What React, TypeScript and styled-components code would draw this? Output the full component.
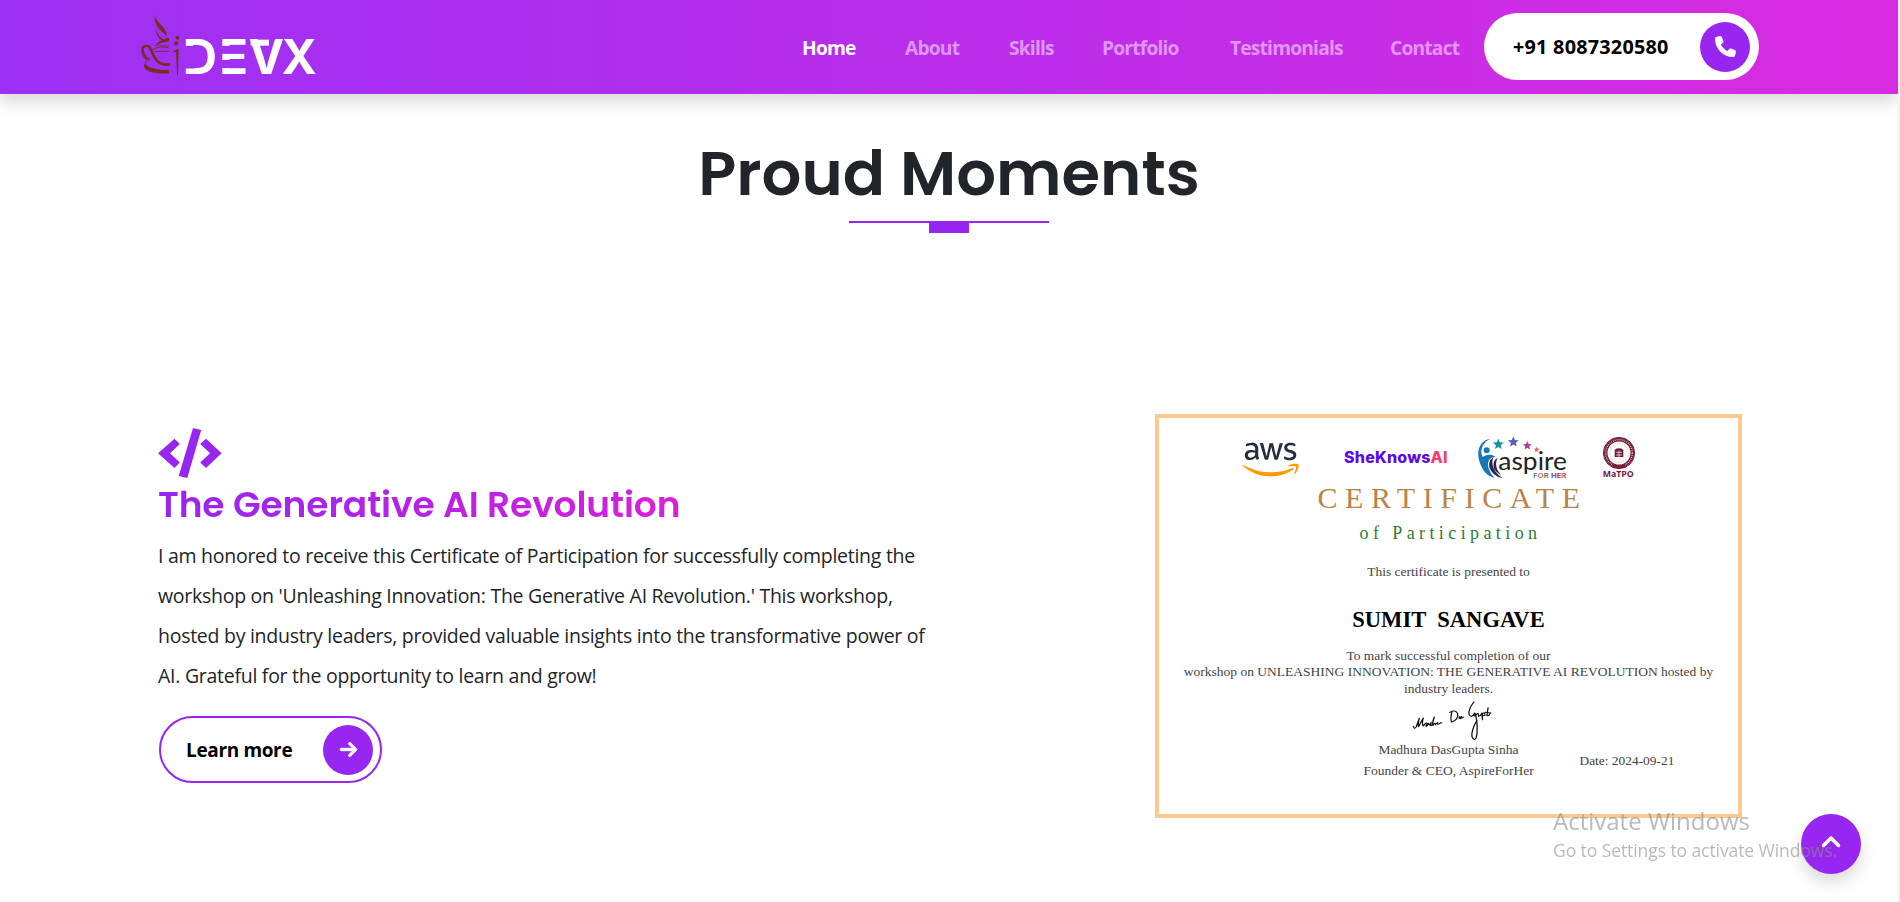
import React from 'react';
import styled, { createGlobalStyle } from 'styled-components';
import { FaPhone, FaArrowRight, FaChevronUp } from 'react-icons/fa6';
import { FaAws } from 'react-icons/fa';

const PURPLE = '#9726f0';
const SANS = '"Open Sans", "Noto Sans", sans-serif';
const DISPLAY = 'Poppins, Inter, sans-serif';

const GlobalStyle = createGlobalStyle`
  * { box-sizing: border-box; }
  html, body { margin: 0; height: 902px; overflow: hidden; background: #fff; }
  h1, h2, p { margin: 0; }
  a { text-decoration: none; color: inherit; }
`;

const Page = styled.div`
  width: 1900px;
  height: 902px;
  overflow: hidden;
  border-right: 2px solid #f1f1f1;
  font-family: ${SANS};
  color: #212529;
`;

const Header = styled.header`
  display: flex;
  align-items: center;
  height: 94px;
  padding: 0 139px 1px 140px;
  background: linear-gradient(to right, #9c30f3, #d82be1);
  box-shadow: 0 8px 16px rgba(0, 0, 0, 0.15);
`;

const LogoMark = styled.svg`
  display: block;
  margin-bottom: 3px;
  overflow: visible;
`;

const Nav = styled.nav`
  display: flex;
  gap: 48px;
  margin-left: auto;
  margin-right: 24px;
  padding-top: 2px;
`;

const NavLink = styled.a<{ $width: number; $active?: boolean }>`
  width: ${p => p.$width}px;
  font-size: 19.2px;
  font-weight: 700;
  line-height: 30px;
  letter-spacing: -0.8px;
  white-space: nowrap;
  color: ${p => (p.$active ? '#fff' : 'rgba(255, 255, 255, 0.5)')};
`;

const PillButton = styled.a<{ $width: number; $outlined?: boolean }>`
  display: flex;
  align-items: center;
  justify-content: space-between;
  width: ${p => p.$width}px;
  height: 67px;
  padding: ${p => (p.$outlined ? '0 7px 0 25px' : '0 9px 0 29px')};
  border: ${p => (p.$outlined ? `2px solid ${PURPLE}` : '0')};
  border-radius: 34px;
  background: #fff;
  color: #000;
  font-size: ${p => (p.$outlined ? 19 : 19.8)}px;
  font-weight: 700;
  letter-spacing: ${p => (p.$outlined ? -0.35 : 0.25)}px;
  white-space: nowrap;
`;

const IconDisc = styled.span`
  display: flex;
  align-items: center;
  justify-content: center;
  width: 50px;
  height: 50px;
  border-radius: 50%;
  background: ${PURPLE};
  color: #fff;
  font-size: 21px;
`;

const BoldArrow = styled(FaArrowRight)`
  stroke: currentColor;
  stroke-width: 26px;
`;

const BoldChevron = styled(FaChevronUp)`
  stroke: currentColor;
  stroke-width: 26px;
`;

const TitleBlock = styled.section`
  display: flex;
  flex-direction: column;
  align-items: center;
  padding-top: 42px;
`;

const Title = styled.h1`
  font-family: ${DISPLAY};
  font-size: 62.5px;
  font-weight: 600;
  line-height: 74px;
`;

const Rule = styled.div`
  display: flex;
  justify-content: center;
  width: 200px;
  height: 12px;
  margin-top: 11px;
  border-top: 2px solid ${PURPLE};
`;

const RuleTab = styled.span`
  width: 40px;
  height: 10px;
  background: ${PURPLE};
`;

const Moment = styled.section`
  display: flex;
  justify-content: space-between;
  align-items: flex-start;
  padding: 181px 156px 0 159px;
`;

const Story = styled.div`
  display: flex;
  flex-direction: column;
  align-items: flex-start;
  width: 780px;
  padding-top: 14px;
`;

const CodeIcon = styled.svg`
  display: block;
  margin-left: -1px;
`;

const StoryTitle = styled.h2`
  margin: 5px 0 10px -1px;
  font-family: ${DISPLAY};
  font-size: 36px;
  font-weight: 600;
  line-height: 43px;
  letter-spacing: -0.1px;
  color: transparent;
  background: linear-gradient(to right, ${PURPLE}, #d91fdc);
  background-clip: text;
  -webkit-background-clip: text;
`;

const StoryText = styled.p`
  margin: 0 0 20px -1px;
  font-size: 19.5px;
  line-height: 40px;
  letter-spacing: -0.27px;
`;

const TextLine = styled.span`
  display: block;
  white-space: nowrap;
`;

const Certificate = styled.article`
  display: flex;
  flex-direction: column;
  width: 587px;
  height: 404px;
  padding-top: 17px;
  border: 4px solid #fcca90;
  background: #fff;
  font-family: "Liberation Serif", "Times New Roman", serif;
  text-align: center;
  color: #444;
`;

const Sponsors = styled.div`
  display: flex;
  height: 47px;
  padding-left: 83px;
`;

const AwsLogo = styled.div`
  width: 57px;
  margin-right: 45px;
  padding-top: 2px;
  svg { display: block; width: 57px; height: 45px; }
`;

const GradientDefs = styled.svg`
  && { position: absolute; width: 0; height: 0; }
`;

const SheKnows = styled.div`
  width: 104px;
  margin-right: 29px;
  padding-top: 10px;
  font: 800 16px/24px Inter, sans-serif;
  letter-spacing: 0.2px;
  text-align: left;
  color: #5a0be8;
`;

const Pink = styled.span`color: #fb3b6e;`;

const AspireLogo = styled.svg`margin-right: 30px;`;

const CertTitle = styled.div`
  padding-left: 8px;
  font-size: 30px;
  line-height: 32px;
  letter-spacing: 7.6px;
  color: #b8844a;
`;

const CertSubtitle = styled.div`
  padding-left: 4px;
  font-size: 18px;
  line-height: 38px;
  letter-spacing: 4.4px;
  color: #2e7d32;
`;

const CertLine = styled.div<{ $height: number }>`
  font-size: 13.5px;
  line-height: ${p => p.$height}px;
  white-space: nowrap;
`;

const Recipient = styled.div`
  padding-top: 2px;
  font-size: 22.6px;
  font-weight: 700;
  line-height: 54.6px;
  white-space: pre;
  color: #000;
`;

const SignRow = styled.div`
  display: grid;
  grid-template-columns: 1fr 170px 1fr;
  align-items: end;
  margin-top: 2.5px;
`;

const Signer = styled.div`
  grid-column: 2;
  svg { display: block; margin: 0 auto -3px 47px; }
`;

const IssueDate = styled.div`
  margin: 0 0 10px 46px;
  font-size: 13.4px;
  line-height: 21px;
  text-align: left;
`;

const ToTop = styled.button`
  position: fixed;
  left: 1801px;
  top: 814px;
  display: flex;
  align-items: center;
  justify-content: center;
  width: 60px;
  height: 60px;
  padding: 0 0 2px;
  border: 0;
  border-radius: 50%;
  background: ${PURPLE};
  box-shadow: 0 8px 16px rgba(0, 0, 0, 0.15);
  color: #fff;
  font-size: 20px;
`;

const Watermark = styled.aside`
  position: fixed;
  left: 1553px;
  top: 804px;
  white-space: nowrap;
  color: rgba(140, 140, 140, 0.6);
`;

const WatermarkTitle = styled.div`
  font-size: 24px;
  line-height: 33px;
`;

const WatermarkText = styled.div`
  font-size: 17.6px;
  line-height: 27px;
  letter-spacing: -0.12px;
`;

const star = (cx: number, cy: number, r: number) =>
  Array.from({ length: 10 }, (_, i) => {
    const a = (Math.PI / 5) * i - Math.PI / 2;
    const d = i % 2 ? r * 0.45 : r;
    return `${(cx + d * Math.cos(a)).toFixed(1)},${(cy + d * Math.sin(a)).toFixed(1)}`;
  }).join(' ');

const navItems = [
  { label: 'Home', width: 55 },
  { label: 'About', width: 56 },
  { label: 'Skills', width: 45 },
  { label: 'Portfolio', width: 80 },
  { label: 'Testimonials', width: 112 },
  { label: 'Contact', width: 70 },
];

const storyLines = [
  'I am honored to receive this Certificate of Participation for successfully completing the',
  "workshop on 'Unleashing Innovation: The Generative AI Revolution.' This workshop,",
  'hosted by industry leaders, provided valuable insights into the transformative power of',
  'AI. Grateful for the opportunity to learn and grow!',
];

const Logo = () => (
  <LogoMark width="177" height="64" viewBox="60 40 531 192">
    <defs>
      <mask id="stencil" maskUnits="userSpaceOnUse" x="180" y="100" width="420" height="140">
        <rect x="180" y="100" width="420" height="140" fill="#fff" />
        <rect x="190" y="138.500" width="34" height="68" fill="#000" />
        <rect x="300" y="138.500" width="86" height="24" fill="#000" />
        <rect x="300" y="181" width="86" height="24" fill="#000" />
      </mask>
    </defs>
    <g fill="#74301f">
      <path d="M103 45C110 70 139 82 142 108C128 98 102 84 103 45Z" />
      <path d="M107 88C112 106 127 116 140 129C124 126 106 108 107 88Z" />
      <path d="M147 114C130 116 112 128 103 142C116 131 132 127 147 125Z" />
      <path d="M76 194C92 208 120 212 147 211V221C112 224 74 218 72 200C72 195 74 192 76 194Z" />
      <path d="M165 152L176 147L174 226H171L168 158L160 156Z" />
      <circle cx="172" cy="114" r="6" />
      <circle cx="169" cy="131" r="6.500" />
    </g>
    <g fill="none" stroke="#74301f" strokeLinecap="round">
      <path strokeWidth="2.500" d="M98 149Q120 137 147 145M104 155H147M112 137Q128 142 146 138" />
      <path strokeWidth="8" d="M79 176C64 160 64 140 78 139C94 138 93 156 103 172C112 190 128 196 146 195" />
      <path strokeWidth="3" d="M81 180C88 186 94 172 88 176C74 188 74 194 78 200" />
    </g>
    <g fill="#fff">
      <rect x="392" y="120" width="55" height="18" />
      <text mask="url(#stencil)" x="188 298 386 485" y="223" fontFamily="Inter, sans-serif" fontWeight="700" fontSize="142">DEVX</text>
    </g>
  </LogoMark>
);

const Aspire = () => (
  <AspireLogo width="93.3" height="46.7" viewBox="110 30 280 140">
    <defs>
      <linearGradient id="her" x1="0" x2="1">
        <stop offset="0" stopColor="#3b6fd0" />
        <stop offset="0.45" stopColor="#b03aa0" />
        <stop offset="0.7" stopColor="#f08a3a" />
        <stop offset="1" stopColor="#5a50c8" />
      </linearGradient>
    </defs>
    <path fill="#1678b8" d="M150 42C120 44 106 78 118 112C126 138 142 154 162 159C138 130 134 98 166 96C152 84 134 90 127 96C117 78 126 52 150 42Z" />
    <circle cx="139" cy="76" r="9" fill="#1678b8" />
    <path fill="#2b2455" d="M159 98C136 106 144 150 186 159C162 142 150 118 159 98ZM172 99C154 106 154 138 182 149C167 134 163 114 172 99Z" />
    <polygon points={star(174, 58, 17)} fill="#16909a" />
    <polygon points={star(219, 51, 17)} fill="#5660c4" />
    <polygon points={star(261, 62, 14)} fill="#b0399c" />
    <polygon points={star(289, 74, 9)} fill="#f05f68" />
    <text x="174" y="136" fontFamily="Lato, sans-serif" fontSize="78" textLength="206" lengthAdjust="spacingAndGlyphs" fill="#222">aspire</text>
    <text x="279" y="160" fontFamily="Inter, sans-serif" fontSize="20" textLength="46" lengthAdjust="spacingAndGlyphs" fill="#333">FOR</text>
    <text x="332" y="160" fontFamily="Inter, sans-serif" fontWeight="800" fontSize="20" textLength="46" lengthAdjust="spacingAndGlyphs" fill="url(#her)">HER</text>
  </AspireLogo>
);

const Seal = () => (
  <svg width="36.7" height="45" viewBox="480 30 110 135">
    <circle cx="537" cy="84" r="47" fill="#fff" stroke="#741c3c" strokeWidth="3" />
    <circle cx="537" cy="84" r="40" fill="none" stroke="#741c3c" strokeWidth="11" />
    <circle cx="537" cy="84" r="40" fill="none" stroke="#d9b9c4" strokeWidth="4" strokeDasharray="3 3" />
    <circle cx="537" cy="84" r="28" fill="#fff" stroke="#c8a86a" strokeWidth="2" strokeDasharray="4 3" />
    <path fill="#741c3c" d="M524 74Q537 66 550 74V96H524Z" />
    <path stroke="#fff" strokeWidth="2" d="M528 82H546M528 90H546M537 76V96" />
    <path fill="#741c3c" d="M519 117L537 122L556 117V129H519Z" />
    <text x="488" y="157" fontFamily="Open Sans, sans-serif" fontWeight="700" fontSize="24" textLength="93" lengthAdjust="spacingAndGlyphs" fill="#741c3c">MaTPO</text>
  </svg>
);

const Signature = () => (
  <svg width="83" height="41.700" viewBox="685 335 210 125" preserveAspectRatio="none" fill="none" stroke="#111" strokeWidth="3.200" strokeLinecap="round" strokeLinejoin="round">
    <path d="M691 414Q693 424 698 416L706 390Q702 408 704 415L716 389Q712 408 716 413Q724 400 726 406Q720 416 725 413L730 405Q731 416 736 402Q732 414 738 411L744 386Q738 404 741 411Q746 400 747 409L752 403Q752 411 757 406Q759 402 763 404" />
    <path d="M788 372Q784 396 788 401Q806 394 803 376Q798 362 783 372M807 390Q806 383 810 386Q808 396 813 385Q812 394 818 386" />
    <path d="M844 341Q830 362 832 378Q838 392 846 374Q842 388 850 380Q856 368 856 384Q862 382 864 374M848 376Q856 420 850 448Q844 460 839 444Q838 424 852 396M864 374L866 394Q864 372 870 374Q876 382 868 382M880 358L877 382Q882 384 886 374M872 372L887 374" />
  </svg>
);

export default function App() {
  return (
    <>
      <GlobalStyle />
      <Page>
        <Header>
          <Logo />
          <Nav>
            {navItems.map((item, i) => (
              <NavLink key={item.label} href="#" $width={item.width} $active={i === 0}>{item.label}</NavLink>
            ))}
          </Nav>
          <PillButton href="#" $width={275}>
            +91 8087320580
            <IconDisc><FaPhone /></IconDisc>
          </PillButton>
        </Header>

        <TitleBlock>
          <Title>Proud Moments</Title>
          <Rule><RuleTab /></Rule>
        </TitleBlock>

        <Moment>
          <Story>
            <CodeIcon width="64" height="50" viewBox="0 0 64 50" fill={PURPLE}>
              <path d="M0 25.300L16.500 10.700L21.800 16L12.100 25.300L21.800 34.500L16.500 40ZM35 0L43.200 2L29.300 50L20.700 48ZM48 10.700L63.600 25.300L48 40L42.200 34.500L52.100 25.300L42.200 16Z" />
            </CodeIcon>
            <StoryTitle>The Generative AI Revolution</StoryTitle>
            <StoryText>
              {storyLines.map(line => <TextLine key={line}>{line}</TextLine>)}
            </StoryText>
            <PillButton href="#" $width={223} $outlined>
              Learn more
              <IconDisc><BoldArrow size={19} /></IconDisc>
            </PillButton>
          </Story>

          <Certificate>
            <Sponsors>
              <AwsLogo>
                <GradientDefs>
                  <linearGradient id="aws" x1="0" y1="0" x2="0" y2="1">
                    <stop offset="0.6" stopColor="#252f3e" />
                    <stop offset="0.6" stopColor="#ff9900" />
                  </linearGradient>
                </GradientDefs>
                <FaAws fill="url(#aws)" />
              </AwsLogo>
              <SheKnows>SheKnows<Pink>AI</Pink></SheKnows>
              <Aspire />
              <Seal />
            </Sponsors>
            <CertTitle>CERTIFICATE</CertTitle>
            <CertSubtitle>of Participation</CertSubtitle>
            <CertLine $height={39}>This certificate is presented to</CertLine>
            <Recipient>{'SUMIT  SANGAVE'}</Recipient>
            <CertLine $height={16.8}>To mark successful completion of our</CertLine>
            <CertLine $height={16.8}>workshop on UNLEASHING INNOVATION: THE GENERATIVE AI REVOLUTION hosted by</CertLine>
            <CertLine $height={16.8}>industry leaders.</CertLine>
            <SignRow>
              <Signer>
                <Signature />
                <CertLine $height={21}>Madhura DasGupta Sinha</CertLine>
                <CertLine $height={21}>Founder &amp; CEO, AspireForHer</CertLine>
              </Signer>
              <IssueDate>Date: 2024-09-21</IssueDate>
            </SignRow>
          </Certificate>
        </Moment>

        <ToTop aria-label="Back to top"><BoldChevron /></ToTop>
        <Watermark>
          <WatermarkTitle>Activate Windows</WatermarkTitle>
          <WatermarkText>Go to Settings to activate Windows.</WatermarkText>
        </Watermark>
      </Page>
    </>
  );
}
